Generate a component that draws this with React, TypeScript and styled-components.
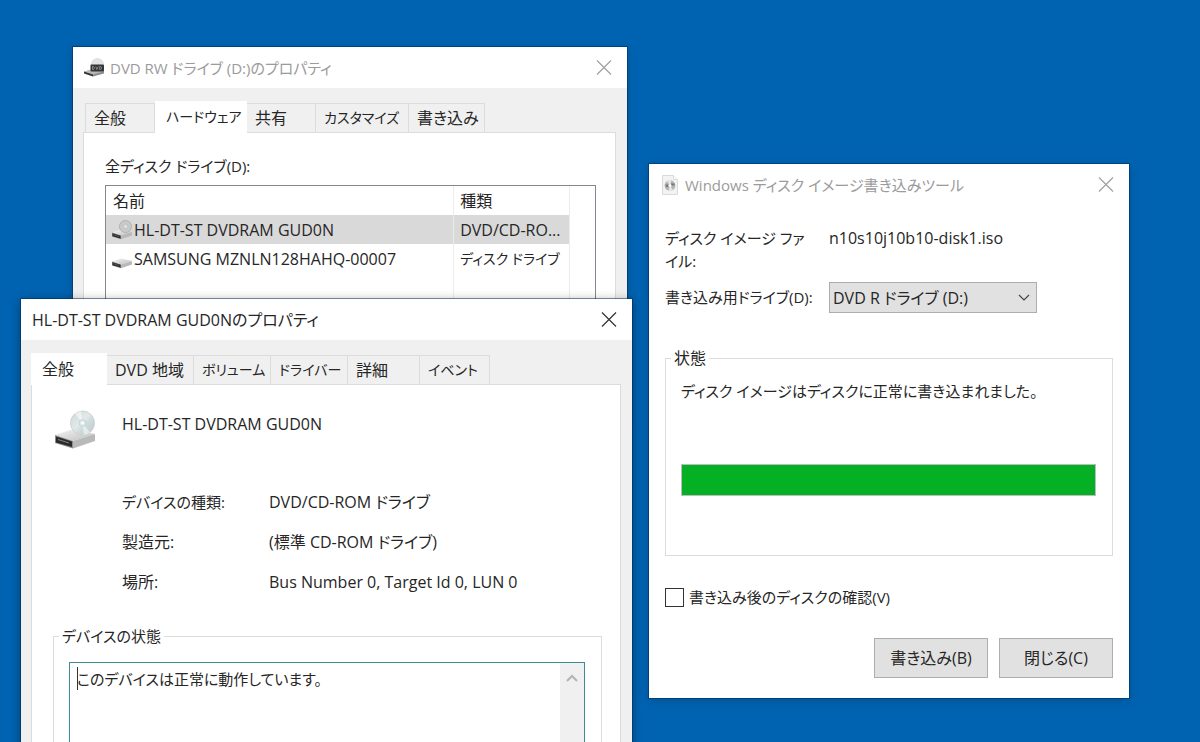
import React from 'react';
import styled, { createGlobalStyle } from 'styled-components';

const GlobalStyle = createGlobalStyle`
  *, *::before, *::after { box-sizing: border-box; }
  body {
    margin: 0;
    background: #0063b1;
    color: #262626;
    font: 16px/24px "Open Sans", "Noto Sans CJK JP", sans-serif;
    font-feature-settings: "palt";
  }
  button, input, select, textarea { font: inherit; color: inherit; font-feature-settings: inherit; }
`;

const Desktop = styled.main`
  position: relative;
  min-height: 100vh;
  overflow: hidden;
`;

const Window = styled.section<{ $width: string; $top: number; $left?: number; $right?: number; $front?: boolean }>`
  position: absolute;
  top: ${(p) => p.$top}px;
  ${(p) => (p.$left !== undefined ? `left: ${p.$left}px;` : '')}
  ${(p) => (p.$right !== undefined ? `right: ${p.$right}px;` : '')}
  width: ${(p) => p.$width};
  background: #fff;
  box-shadow: 0 0 0 1px rgba(0, 40, 80, 0.5), 0 2px 10px rgba(0, 0, 0, ${(p) => (p.$front ? 0.4 : 0.2)});
`;

const TitleBar = styled.header<{ $active?: boolean }>`
  display: flex;
  align-items: center;
  gap: 5px;
  height: 41px;
  padding: 0 15px 0 11px;
  color: ${(p) => (p.$active ? '#262626' : '#9b9b9b')};
`;

const Title = styled.h1<{ $compact?: boolean }>`
  flex: 1;
  margin: 0;
  font-size: ${(p) => (p.$compact ? 15 : 16)}px;
  font-weight: 400;
  white-space: nowrap;
`;

const CloseButton = styled.button`
  display: flex;
  padding: 0;
  border: 0;
  background: none;
`;

const SheetBody = styled.div`
  padding: 12px 11px 12px 10px;
  background: #f0f0f0;
`;

const Tabs = styled.div<{ $inset?: boolean }>`
  display: flex;
  align-items: flex-end;
  height: 32px;
  margin-left: ${(p) => (p.$inset ? 2 : 0)}px;
`;

const Tab = styled.button<{ $width: number; $selected?: boolean; $kana?: boolean }>`
  position: relative;
  width: ${(p) => p.$width}px;
  height: ${(p) => (p.$selected ? 32 : 29)}px;
  margin-bottom: ${(p) => (p.$selected ? -1 : 0)}px;
  padding: 0 0 ${(p) => (p.$selected ? 2 : 0)}px ${(p) => (p.$selected ? 10 : 8)}px;
  border: 1px solid ${(p) => (p.$selected ? '#fff' : '#dcdcdc')};
  border-left-width: ${(p) => (p.$selected ? 1 : 0)}px;
  border-bottom: 0;
  background: ${(p) => (p.$selected ? '#fff' : '#f0f0f0')};
  font-size: ${(p) => (p.$kana ? 14 : 16)}px;
  text-align: left;
  white-space: nowrap;
  z-index: ${(p) => (p.$selected ? 1 : 0)};
  &:first-child { border-left-width: 1px; }
`;

const TabPanel = styled.div`
  border: 1px solid #dcdcdc;
  background: #fff;
`;

const HardwarePane = styled(TabPanel)`
  padding: 21px 19px 20px 21px;
`;

const ListLabel = styled.div`
  margin-bottom: 7px;
  font-size: 15px;
`;

const ListBox = styled.div`
  min-height: 200px;
  padding-right: 25px;
  border: 1px solid #828790;
`;

const DriveTable = styled.table`
  width: 100%;
  height: 198px;
  border-collapse: collapse;
  table-layout: fixed;
`;

const Row = styled.tr<{ $selected?: boolean }>`
  height: 29px;
  background: ${(p) => (p.$selected ? '#d9d9d9' : 'transparent')};
`;

const cell = `
  padding: 0 0 0 6px;
  border-right: 1px solid #ececec;
  font-weight: 400;
  text-align: left;
  white-space: nowrap;
`;
const HeadCell = styled.th<{ $wide?: boolean }>`
  ${cell}
  width: ${(p) => (p.$wide ? '75%' : '25%')};
  padding-left: ${(p) => (p.$wide ? 7 : 6)}px;
`;
const Cell = styled.td<{ $kana?: boolean }>`
  ${cell}
  font-size: ${(p) => (p.$kana ? 14 : 16)}px;
`;
const DriveName = styled.span`
  display: flex;
  align-items: center;
  gap: 2px;
`;

const GeneralPane = styled(TabPanel)`
  padding: 21px 18px 40px 21px;
`;

const DeviceHeading = styled.div`
  display: flex;
  align-items: center;
  gap: 27px;
  height: 48px;
  padding-left: 2px;
`;
const DeviceName = styled.div`
  padding-bottom: 12px;
`;

const Facts = styled.dl`
  display: grid;
  grid-template-columns: 147px 1fr;
  row-gap: 16px;
  margin: 36px 0 30px 69px;
`;
const Term = styled.dt<{ $compact?: boolean }>`
  font-size: ${(p) => (p.$compact ? 15 : 16)}px;
`;
const Detail = styled.dd`
  margin: 0;
`;

const Group = styled.fieldset<{ $pad: string }>`
  margin: 0;
  min-width: 0;
  padding: ${(p) => p.$pad};
  border: 1px solid #dcdcdc;
`;
const Legend = styled.legend<{ $compact?: boolean }>`
  margin-left: -10px;
  padding: 0 3px;
  font-size: ${(p) => (p.$compact ? 15 : 16)}px;
`;

const StatusBox = styled.div`
  position: relative;
  display: flex;
  height: 140px;
  border: 1px solid #3f8a96;
`;
const StatusText = styled.textarea`
  flex: 1;
  padding: 4px 7px;
  border: 0;
  outline: 0;
  resize: none;
  overflow: hidden;
  background: #fff;
  font-size: 15px;
`;
const Caret = styled.span`
  position: absolute;
  top: 4px;
  left: 7px;
  width: 1px;
  height: 23px;
  background: #333;
`;
const ScrollTrack = styled.div`
  width: 24px;
  background: #f0f0f0;
`;
const ScrollButton = styled.button`
  display: flex;
  align-items: center;
  justify-content: center;
  width: 100%;
  height: 30px;
  padding: 0;
  border: 0;
  background: none;
`;

const BurnForm = styled.form`
  padding: 22px 16px 20px;
`;
const Fields = styled.div`
  display: grid;
  grid-template-columns: 164px 1fr;
  row-gap: 9px;
  align-items: start;
  line-height: 23px;
`;
const ImageLabel = styled.span`
  max-width: 146px;
  font-size: 15px;
`;
const DriveField = styled.div`
  position: relative;
  width: 208px;
  display: flex;
  align-items: center;
`;
const DriveSelect = styled.select`
  width: 100%;
  height: 31px;
  padding: 1px 4px 0 3px;
  border: 1px solid #adadad;
  border-radius: 0;
  background: #e1e1e1;
  appearance: none;
`;
const SelectArrow = styled.svg`
  position: absolute;
  right: 7px;
  pointer-events: none;
`;
const SelectLabel = styled.label`
  align-self: center;
  font-size: 15px;
`;
const StatusGroup = styled(Group)`
  margin-top: 33px;
`;
const Message = styled.p`
  margin: 0 0 61px;
  font-size: 15px;
`;
const Progress = styled.progress`
  display: block;
  width: 100%;
  height: 32px;
  border: 1px solid #bcbcbc;
  appearance: none;
  background: #e6e6e6;
  &::-webkit-progress-bar { background: #e6e6e6; }
  &::-webkit-progress-value { background: #06b025; }
`;
const CheckLabel = styled.label`
  display: flex;
  align-items: center;
  gap: 5px;
  margin-top: 29px;
  font-size: 15px;
`;
const CheckBox = styled.input`
  width: 19px;
  height: 19px;
  margin: 0;
  border: 1px solid #333;
  background: #fff;
  appearance: none;
`;
const Actions = styled.div`
  display: flex;
  justify-content: flex-end;
  gap: 11px;
  margin-top: 29px;
`;
const PushButton = styled.button`
  width: 114px;
  height: 40px;
  padding: 0;
  border: 1px solid #adadad;
  background: #e1e1e1;
`;

const CloseGlyph = ({ color }: { color: string }) => (
  <svg width="16" height="16" viewBox="0 0 16 16" stroke={color} strokeWidth="1.2" aria-hidden="true">
    <path d="M1 0.500 15 14.500M15 0.500 1 14.500" />
  </svg>
);

const DriveIcon = ({ size, disc, id }: { size: number; disc?: boolean; id: string }) => (
  <svg width={size} height={size} viewBox="0 0 40 40" aria-hidden="true">
    <defs>
      <linearGradient id={`${id}-top`} x1="0" y1="0" x2="1" y2="1">
        <stop offset="0" stopColor="#f6f6f6" />
        <stop offset="1" stopColor="#bdbdbd" />
      </linearGradient>
      <linearGradient id={`${id}-disc`} x1="0" y1="0" x2="1" y2="1">
        <stop offset="0" stopColor="#cdd6d6" />
        <stop offset="0.45" stopColor="#e2eae9" />
        <stop offset="0.6" stopColor="#cfdcdc" />
        <stop offset="1" stopColor="#c2c9ca" />
      </linearGradient>
    </defs>
    <path d="M0 25 18 19 40 24 18 31Z" fill={`url(#${id}-top)`} />
    <path d="M18 31 40 24V31L18 38.500Z" fill="#b9b9b9" />
    <path d="M0 25 18 31V38.500L0 33Z" fill="#8c8c8c" />
    <path d="M1 26.500 17 31.500V37L1 32.500Z" fill="#2b2b2b" />
    <path d="M3 29.500 14 33" stroke="#858585" strokeWidth="1" />
    {disc && size > 24 && (
      <g>
        <circle cx="27.500" cy="13" r="12" fill={`url(#${id}-disc)`} stroke="#c6cdcd" strokeWidth="0.800" />
        <path d="M27.500 13 20 3.500A12 12 0 0 1 26 1Z" fill="#fff" opacity="0.500" />
        <path d="M27.500 13 35 22.500A12 12 0 0 1 29 25Z" fill="#fff" opacity="0.500" />
        <circle cx="27.500" cy="13" r="3.400" fill="#dfe9e8" stroke="#bdcaca" strokeWidth="0.700" />
        <circle cx="27.500" cy="13" r="1.300" fill="#fff" />
      </g>
    )}
    {disc && size <= 24 && (
      <g>
        <circle cx="27" cy="13" r="12" fill="#c9cbcb" stroke="#a9adad" strokeWidth="1.800" />
        <circle cx="27" cy="13" r="5" fill="#dcdede" stroke="#b4b8b8" strokeWidth="1.500" />
      </g>
    )}
  </svg>
);

const DvdDriveIcon = () => (
  <svg width="21" height="20" viewBox="0 0 21 20" aria-hidden="true">
    <circle cx="13.500" cy="6.500" r="6" fill="#e2e4e5" stroke="#d0d3d4" strokeWidth="0.600" />
    <path d="M0 13.500 7 11.500 20 13 9 17Z" fill="#b8b8b8" />
    <path d="M9 16.500 20 13V15.500L9 18.500Z" fill="#8d8d8d" />
    <path d="M0 13.500 9 16.500V18.500L0 15.500Z" fill="#333" />
    <rect x="6.500" y="6.500" width="13.500" height="7" rx="1" fill="#353535" />
    <path d="M8.500 8.500v3h1l1-1.500-1-1.500zM11.800 8.500l1.200 3 1.200-3M15.700 8.500v3h1l1-1.500-1-1.500z" fill="none" stroke="#a8a8a8" strokeWidth="0.700" />
  </svg>
);

const DiscImageIcon = () => (
  <svg width="20" height="20" viewBox="-2 0 20 20" aria-hidden="true">
    <path d="M0.500 0.500h11l4 4v15h-15z" fill="#f3f3f3" stroke="#dadada" />
    <path d="M11.500 0.500v4h4" fill="#fff" stroke="#dadada" />
    <circle cx="8" cy="10.500" r="5.400" fill="#b4b4b4" />
    <path d="M8 10.500 5 6A5.400 5.400 0 0 1 9.500 5.300ZM8 10.500 11 15A5.400 5.400 0 0 1 6.500 15.700Z" fill="#e6e6e6" />
    <path d="M3.500 9.500h3v2.500h-2.500zM9 8.500h3.500v2h-3.500z" fill="#777" />
    <circle cx="8" cy="10.500" r="1.500" fill="#fff" />
  </svg>
);

type TabItem = { label: string; width: number; kana?: boolean };

const TabStrip = ({ items, selected, inset }: { items: TabItem[]; selected: string; inset?: boolean }) => (
  <Tabs role="tablist" $inset={inset}>
    {items.map((t) => (
      <Tab
        key={t.label}
        type="button"
        role="tab"
        aria-selected={t.label === selected}
        $width={t.width}
        $selected={t.label === selected}
        $kana={t.kana}
      >
        {t.label}
      </Tab>
    ))}
  </Tabs>
);

const driveTabs: TabItem[] = [
  { label: '全般', width: 70 },
  { label: 'ハードウェア', width: 92, kana: true },
  { label: '共有', width: 69 },
  { label: 'カスタマイズ', width: 93, kana: true },
  { label: '書き込み', width: 76 },
];

const deviceTabs: TabItem[] = [
  { label: '全般', width: 76 },
  { label: 'DVD 地域', width: 87 },
  { label: 'ボリューム', width: 77, kana: true },
  { label: 'ドライバー', width: 77, kana: true },
  { label: '詳細', width: 72 },
  { label: 'イベント', width: 70, kana: true },
];

export default function App() {
  return (
    <Desktop>
      <GlobalStyle />

      <Window $width="calc(46% + 2px)" $top={47} $left={73} aria-label="DVD RW ドライブ">
        <TitleBar>
          <DvdDriveIcon />
          <Title $compact>DVD RW ドライブ (D:)のプロパティ</Title>
          <CloseButton type="button" aria-label="閉じる"><CloseGlyph color="#a0a0a0" /></CloseButton>
        </TitleBar>
        <SheetBody>
          <TabStrip items={driveTabs} selected="ハードウェア" inset />
          <HardwarePane role="tabpanel">
            <ListLabel id="drives">全ディスク ドライブ(D):</ListLabel>
            <ListBox>
              <DriveTable aria-labelledby="drives">
                <thead>
                  <Row><HeadCell $wide>名前</HeadCell><HeadCell>種類</HeadCell></Row>
                </thead>
                <tbody>
                  <Row $selected>
                    <Cell><DriveName><DriveIcon size={20} disc id="list-dvd" />HL-DT-ST DVDRAM GUD0N</DriveName></Cell>
                    <Cell>DVD/CD-RO...</Cell>
                  </Row>
                  <Row>
                    <Cell><DriveName><DriveIcon size={20} id="list-hdd" />SAMSUNG MZNLN128HAHQ-00007</DriveName></Cell>
                    <Cell $kana>ディスク ドライブ</Cell>
                  </Row>
                  <tr><Cell /><Cell /></tr>
                </tbody>
              </DriveTable>
            </ListBox>
          </HardwarePane>
        </SheetBody>
      </Window>

      <Window $width="calc(51% - 1px)" $top={299} $left={21} $front aria-label="HL-DT-ST DVDRAM GUD0N">
        <TitleBar $active>
          <Title>HL-DT-ST DVDRAM GUD0Nのプロパティ</Title>
          <CloseButton type="button" aria-label="閉じる"><CloseGlyph color="#333" /></CloseButton>
        </TitleBar>
        <SheetBody>
          <TabStrip items={deviceTabs} selected="全般" />
          <GeneralPane role="tabpanel">
            <DeviceHeading>
              <DriveIcon size={40} disc id="device" />
              <DeviceName>HL-DT-ST DVDRAM GUD0N</DeviceName>
            </DeviceHeading>
            <Facts>
              <Term $compact>デバイスの種類:</Term><Detail>DVD/CD-ROM ドライブ</Detail>
              <Term>製造元:</Term><Detail>(標準 CD-ROM ドライブ)</Detail>
              <Term>場所:</Term><Detail>Bus Number 0, Target Id 0, LUN 0</Detail>
            </Facts>
            <Group $pad="14px 16px 16px 15px">
              <Legend $compact>デバイスの状態</Legend>
              <StatusBox>
                <StatusText aria-label="デバイスの状態" readOnly value="このデバイスは正常に動作しています。" />
                <Caret />
                <ScrollTrack>
                  <ScrollButton type="button" aria-label="上へ">
                    <svg width="12" height="8" viewBox="0 0 12 8" fill="none" stroke="#b4b4b4" strokeWidth="2" aria-hidden="true"><path d="M1 7 6 2 11 7" /></svg>
                  </ScrollButton>
                </ScrollTrack>
              </StatusBox>
            </Group>
          </GeneralPane>
        </SheetBody>
      </Window>

      <Window $width="40%" $top={164} $right={71} aria-label="Windows ディスク イメージ書き込みツール">
        <TitleBar>
          <DiscImageIcon />
          <Title $compact>Windows ディスク イメージ書き込みツール</Title>
          <CloseButton type="button" aria-label="閉じる"><CloseGlyph color="#a0a0a0" /></CloseButton>
        </TitleBar>
        <BurnForm onSubmit={(e) => e.preventDefault()}>
          <Fields>
            <ImageLabel>ディスク イメージ ファイル:</ImageLabel>
            <span>n10s10j10b10-disk1.iso</span>
            <SelectLabel htmlFor="burner">書き込み用ドライブ(D):</SelectLabel>
            <DriveField>
              <DriveSelect id="burner"><option>DVD R ドライブ (D:)</option></DriveSelect>
              <SelectArrow width="12" height="8" viewBox="0 0 12 8" fill="none" stroke="#444" strokeWidth="1.200" aria-hidden="true"><path d="M1 1 6 6 11 1" /></SelectArrow>
            </DriveField>
          </Fields>
          <StatusGroup $pad="9px 16px 59px 15px">
            <Legend>状態</Legend>
            <Message>ディスク イメージはディスクに正常に書き込まれました。</Message>
            <Progress value={100} max={100} aria-label="状態" />
          </StatusGroup>
          <CheckLabel><CheckBox type="checkbox" />書き込み後のディスクの確認(V)</CheckLabel>
          <Actions>
            <PushButton type="submit">書き込み(B)</PushButton>
            <PushButton type="button">閉じる(C)</PushButton>
          </Actions>
        </BurnForm>
      </Window>
    </Desktop>
  );
}
